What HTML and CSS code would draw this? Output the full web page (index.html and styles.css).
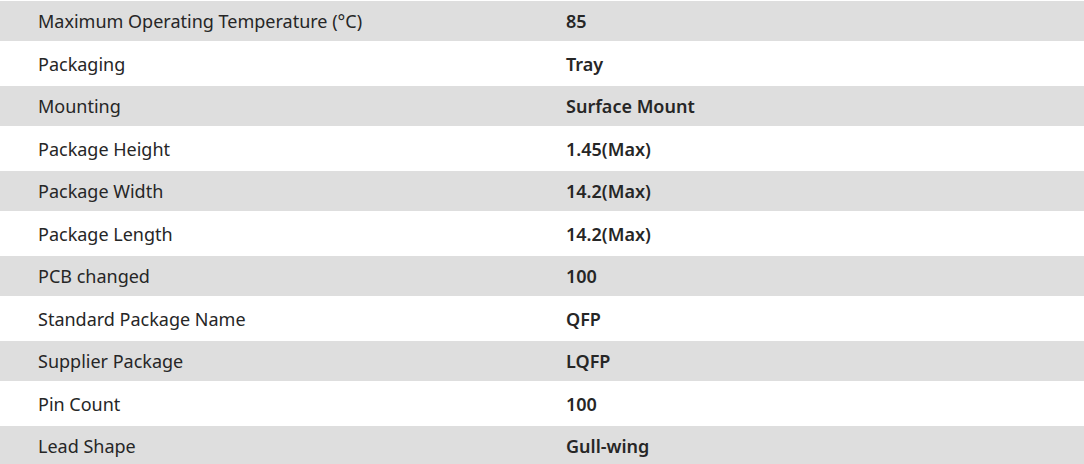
FILE: index.html
```html
<!DOCTYPE html>
<html>
<head>
<meta charset="utf-8">
<link rel="stylesheet" href="styles.css">
</head>
<body>
<div class="specs">
  <div class="row"><div class="label">Maximum Operating Temperature (°C)</div><div class="value">85</div></div>
  <div class="row"><div class="label">Packaging</div><div class="value">Tray</div></div>
  <div class="row"><div class="label">Mounting</div><div class="value">Surface Mount</div></div>
  <div class="row"><div class="label">Package Height</div><div class="value">1.45(Max)</div></div>
  <div class="row"><div class="label">Package Width</div><div class="value">14.2(Max)</div></div>
  <div class="row"><div class="label">Package Length</div><div class="value">14.2(Max)</div></div>
  <div class="row"><div class="label">PCB changed</div><div class="value">100</div></div>
  <div class="row"><div class="label">Standard Package Name</div><div class="value">QFP</div></div>
  <div class="row"><div class="label">Supplier Package</div><div class="value">LQFP</div></div>
  <div class="row"><div class="label">Pin Count</div><div class="value">100</div></div>
  <div class="row"><div class="label">Lead Shape</div><div class="value">Gull-wing</div></div>
</div>
</body>
</html>
```

FILE: styles.css
```css
html, body {
  margin: 0;
  padding: 0;
  background: #ffffff;
}
body {
  font-family: "Noto Sans", "Open Sans", sans-serif;
  font-size: 18px;
  color: #262626;
  padding-top: 1px;
}
.specs {
  display: flex;
  flex-direction: column;
}
.row {
  display: grid;
  grid-template-columns: 528px 1fr;
  align-items: center;
  height: 45px;
}
.row:nth-child(odd) {
  background: #dedede;
  height: 40px;
}
.label {
  padding-left: 38px;
}
.value {
  padding-left: 38px;
  font-weight: 600;
}
```
